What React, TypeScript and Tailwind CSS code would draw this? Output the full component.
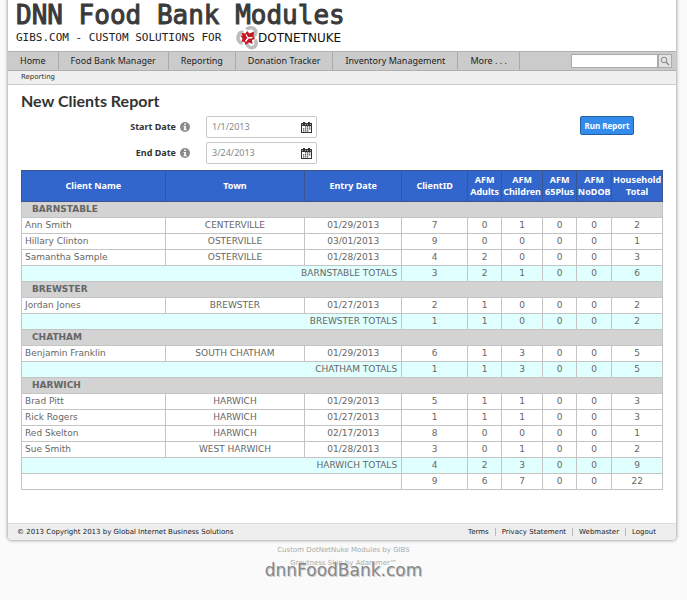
import { useState } from 'react'

type Counts = [number, number, number, number, number, number]

type Client = { name: string; town: string; date: string; counts: Counts }

type Group = { town: string; clients: Client[]; totals: Counts }

const navItems = ['Home', 'Food Bank Manager', 'Reporting', 'Donation Tracker', 'Inventory Management', 'More . . .']
const footerLinks = ['Terms', 'Privacy Statement', 'Webmaster', 'Logout']

const groups: Group[] = [
  {
    town: 'BARNSTABLE',
    clients: [
      { name: 'Ann Smith', town: 'CENTERVILLE', date: '01/29/2013', counts: [7, 0, 1, 0, 0, 2] },
      { name: 'Hillary Clinton', town: 'OSTERVILLE', date: '03/01/2013', counts: [9, 0, 0, 0, 0, 1] },
      { name: 'Samantha Sample', town: 'OSTERVILLE', date: '01/28/2013', counts: [4, 2, 0, 0, 0, 3] },
    ],
    totals: [3, 2, 1, 0, 0, 6],
  },
  {
    town: 'BREWSTER',
    clients: [{ name: 'Jordan Jones', town: 'BREWSTER', date: '01/27/2013', counts: [2, 1, 0, 0, 0, 2] }],
    totals: [1, 1, 0, 0, 0, 2],
  },
  {
    town: 'CHATHAM',
    clients: [{ name: 'Benjamin Franklin', town: 'SOUTH CHATHAM', date: '01/29/2013', counts: [6, 1, 3, 0, 0, 5] }],
    totals: [1, 1, 3, 0, 0, 5],
  },
  {
    town: 'HARWICH',
    clients: [
      { name: 'Brad Pitt', town: 'HARWICH', date: '01/29/2013', counts: [5, 1, 1, 0, 0, 3] },
      { name: 'Rick Rogers', town: 'HARWICH', date: '01/27/2013', counts: [1, 1, 1, 0, 0, 3] },
      { name: 'Red Skelton', town: 'HARWICH', date: '02/17/2013', counts: [8, 0, 0, 0, 0, 1] },
      { name: 'Sue Smith', town: 'WEST HARWICH', date: '01/28/2013', counts: [3, 0, 1, 0, 0, 2] },
    ],
    totals: [4, 2, 3, 0, 0, 9],
  },
]
const grandTotals: Counts = [9, 6, 7, 0, 0, 22]

function DnnMark() {
  return (
    <svg className="size-6 shrink-0" viewBox="0 0 24 24" fill="none" aria-hidden="true">
      <g stroke="#bdbdbd" strokeWidth="3.6">
        <path d="M10.500 3.500C13 0.800 18 1.200 19.500 4.500C20.500 7.500 18.500 10 16 10.500" />
        <path d="M19 14C21.500 17 19.500 21.800 15.500 21.800C12.500 21.500 11 19 11.500 17" />
        <path d="M6.500 17C3 17 1.500 13.500 2.200 10.500C3 7.500 5 6 7.500 6.500" />
      </g>
      <path fill="#c41624" d="M5.500 7l4 .5L11 5l2.500 2.500L18 5.500l-.5 4.500 1.500 3-3 1 .5 4-3.500-1.500L9.500 19 8.500 16l-3-.5 1-3L4.500 10l2-.7z" />
      <path stroke="#fff" strokeWidth="1.300" d="M12 12L10 8.500M12 12l4.500-.5M12 12l-2.500 3.500" />
    </svg>
  )
}

function InfoIcon() {
  return (
    <svg className="size-[10px] shrink-0" viewBox="0 0 10 10" aria-hidden="true">
      <circle cx="5" cy="5" r="5" fill="#8a8a8a" />
      <path fill="#fff" d="M4.200 1.500h1.700v1.500H4.200zM3.500 3.900h2.400v3.400h.7v1H3.500v-1h.7V4.900h-.7z" />
    </svg>
  )
}

function CalendarIcon() {
  return (
    <svg className="size-[11px]" viewBox="0 0 11 11" aria-hidden="true">
      <path fill="#333" d="M0 1h11v10H0z" />
      <path fill="#fff" d="M1 4h9v6H1z" />
      <path fill="#333" d="M2 0h2v2H2zM7 0h2v2H7z" />
      <path fill="#aaa" d="M1 2h1v1H1zM4 2h1v1H4zM6 2h1v1H6zM9 2h1v1H9z" />
      <path fill="#444" d="M4 4.200h1.300v1.300H4zM6 4.200h1.300v1.300H6zM8 4.200h1.300v1.300H8zM2 6.200h1.300v1.300H2zM4 6.200h1.300v1.300H4zM6 6.200h1.300v1.300H6zM8 6.200h1.300v1.300H8zM2 8.200h1.300v1.300H2zM4 8.200h1.300v1.300H4zM6 8.200h1.300v1.300H6z" />
    </svg>
  )
}

function DateField({ id, label, initial }: { id: string; label: string; initial: string }) {
  const [value, setValue] = useState(initial)
  return (
    <div className="flex items-center">
      <div className="w-[169px] flex items-center justify-end gap-1">
        <label htmlFor={id} className="text-[9px] font-bold text-[#333]">{label}</label>
        <InfoIcon />
      </div>
      <div className="ml-4 w-[111px] h-[22px] flex items-center border border-[#c9c9c9] rounded-xs bg-white">
        <input
          id={id}
          className="min-w-0 flex-1 pl-[5px] text-[9px] text-[#888] outline-none"
          value={value}
          onChange={e => setValue(e.target.value)}
        />
        <button className="pr-1 cursor-pointer" aria-label={`Pick ${label}`}><CalendarIcon /></button>
      </div>
    </div>
  )
}

function CountCells({ counts }: { counts: Counts }) {
  return counts.map((n, i) => <td key={i} className="border border-[#c4c4c4] p-0">{n}</td>)
}

function ReportTable() {
  return (
    <table className="w-full table-fixed border-collapse border border-[#bbb] text-center font-['DejaVu_Sans'] text-[9px] leading-[15px] text-[#666]">
      <colgroup>
        <col className="w-[22.4%]" />
        <col className="w-[21.8%]" />
        <col className="w-[15.1%]" />
        <col className="w-[10.3%]" />
        <col className="w-[5.3%]" />
        <col className="w-[6.4%]" />
        <col className="w-[5.3%]" />
        <col className="w-[5.5%]" />
        <col className="w-[7.9%]" />
      </colgroup>
      <thead className="bg-[#3366cc] font-['Noto_Sans'] leading-3 text-white">
        <tr className="h-[31px]">
          {['Client Name', 'Town', 'Entry Date', 'ClientID', 'AFM Adults', 'AFM Children', 'AFM 65Plus', 'AFM NoDOB', 'Household Total'].map(h => (
            <th key={h} className="border border-[#3a5590] p-0 font-bold">{h}</th>
          ))}
        </tr>
      </thead>
      {groups.map(g => (
        <tbody key={g.town}>
          <tr className="bg-[#d3d3d3]">
            <th colSpan={9} scope="rowgroup" className="border border-[#c4c4c4] py-0 pl-[10px] text-left font-bold">{g.town}</th>
          </tr>
          {g.clients.map(c => (
            <tr key={c.name} className="bg-white">
              <td className="border border-[#c4c4c4] py-0 pl-[3px] text-left">{c.name}</td>
              <td className="border border-[#c4c4c4] p-0">{c.town}</td>
              <td className="border border-[#c4c4c4] p-0">{c.date}</td>
              <CountCells counts={c.counts} />
            </tr>
          ))}
          <tr className="bg-[#e0ffff]">
            <td colSpan={3} className="border border-[#c4c4c4] py-0 pr-1 text-right">{g.town} TOTALS</td>
            <CountCells counts={g.totals} />
          </tr>
        </tbody>
      ))}
      <tfoot>
        <tr>
          <td colSpan={3} className="border border-[#c4c4c4] p-0" />
          <CountCells counts={grandTotals} />
        </tr>
      </tfoot>
    </table>
  )
}

function App() {
  return (
    <div className="min-h-screen bg-[#fafafa] font-['Noto_Sans',sans-serif] text-[#333]">
      <div className="ml-2 mr-[11px] bg-white rounded-b-sm shadow-[0_0_3px_1px_#aaa]">
        <header className="h-[51px] pl-2">
          <h1 className="font-['DejaVu_Sans_Mono'] text-[26px] leading-[30px] text-[#3a3a3a] [-webkit-text-stroke:1px_#3a3a3a]">DNN Food Bank Modules</h1>
          <div className="-mt-1 flex items-center">
            <span className="w-[220px] font-['DejaVu_Sans_Mono'] text-[11px] leading-[22px] text-[#222]">GIBS.COM - CUSTOM SOLUTIONS FOR</span>
            <DnnMark />
            <span className="-ml-0.5 font-['DejaVu_Sans'] text-[12px] leading-[22px] text-[#111]">DOTNETNUKE</span>
          </div>
        </header>

        <nav className="h-5 flex items-stretch border-y border-[#b0b0b0] bg-[#cbcbcb] text-[9px]">
          {navItems.map(item => (
            <a key={item} href="#" className="flex items-center px-3 border-r border-[#aaa] text-[#222]">{item}</a>
          ))}
          <form className="ml-auto mr-1 flex items-center" onSubmit={e => e.preventDefault()}>
            <input aria-label="Search" className="w-[87px] h-[14px] border border-[#aaa] bg-white px-1 outline-none" />
            <button aria-label="Go" className="size-[14px] border border-[#aaa] bg-[#e4e4e4] flex items-center justify-center cursor-pointer">
              <svg className="size-[10px]" viewBox="0 0 10 10" fill="none" stroke="#888" aria-hidden="true">
                <circle cx="4" cy="4" r="2.800" />
                <path d="M6.200 6.200L9 9" strokeWidth="1.500" />
              </svg>
            </button>
          </form>
        </nav>
        <div className="h-[14px] pl-[13px] border-b border-[#ccc] bg-[#f0f0f0] font-['DejaVu_Sans'] text-[7px] leading-[13px]">Reporting</div>

        <main className="px-[13px] pt-2 pb-[33px]">
          <h2 className="font-['Lato'] text-[16px] leading-4 font-bold text-[#333]">New Clients Report</h2>
          <div className="flex items-start justify-between pt-[7px] pb-[6px]">
            <div className="flex flex-col gap-1">
              <DateField id="start" label="Start Date" initial="1/1/2013" />
              <DateField id="end" label="End Date" initial="3/24/2013" />
            </div>
            <button className="mr-[29px] w-[54px] h-[19px] rounded-xs border border-[#2360a0] bg-[#338cec] text-[8px] leading-4 font-bold text-white cursor-pointer">
              Run Report
            </button>
          </div>
          <ReportTable />
        </main>

        <footer className="h-[17px] px-[9px] flex items-center justify-between border-t border-[#ddd] bg-[#eee] rounded-b-sm font-['DejaVu_Sans'] text-[7px] text-[#222]">
          <span>© 2013 Copyright 2013 by Global Internet Business Solutions</span>
          <div className="flex mr-[5px]">
            {footerLinks.map(link => (
              <a key={link} href="#" className="px-[6px] leading-2 border-r border-[#bbb] last:border-r-0">{link}</a>
            ))}
          </div>
        </footer>
      </div>

      <div className="relative pt-1 text-center font-['DejaVu_Sans'] text-[7px] leading-[13px] text-[#aaa]">
        <p>Custom DotNetNuke Modules by GIBS</p>
        <p>Greytness Skin by Adammer™</p>
        <p className="absolute inset-x-0 top-5 text-[17px] leading-5 text-[#888] [text-shadow:1px_1px_0_#ccc]">dnnFoodBank.com</p>
      </div>
    </div>
  )
}

export default App
